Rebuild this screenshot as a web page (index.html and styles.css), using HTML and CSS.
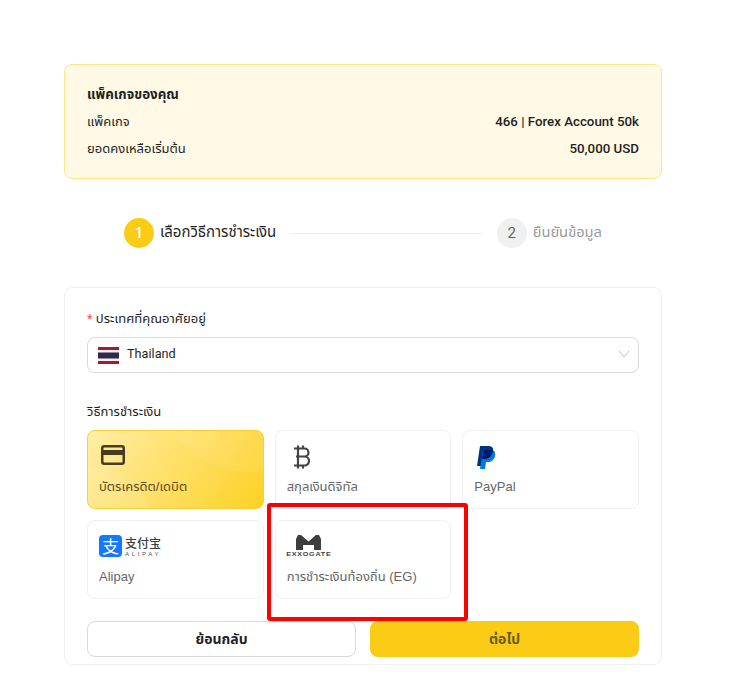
FILE: index.html
```html
<!DOCTYPE html>
<html lang="th">
<head>
<meta charset="utf-8">
<title>แพ็คเกจของคุณ</title>
<link rel="stylesheet" href="styles.css">
</head>
<body>
<main class="page">
  <section class="summary">
    <h2 class="summary-title">แพ็คเกจของคุณ</h2>
    <div class="summary-row"><span>แพ็คเกจ</span><strong>466 | Forex Account 50k</strong></div>
    <div class="summary-row"><span>ยอดคงเหลือเริ่มต้น</span><strong>50,000 USD</strong></div>
  </section>

  <ol class="steps">
    <li class="step active"><span class="step-num">1</span><span class="step-text">เลือกวิธีการชำระเงิน</span></li>
    <li class="step-line"></li>
    <li class="step"><span class="step-num">2</span><span class="step-text">ยืนยันข้อมูล</span></li>
  </ol>

  <section class="card">
    <label class="field-label"><span class="req">*</span> ประเทศที่คุณอาศัยอยู่</label>
    <div class="select">
      <svg class="flag" width="21" height="17" viewBox="0 0 21 17"><rect width="21" height="17" fill="#f4f0f2"/><rect width="21" height="3" fill="#a51931"/><rect y="5.500" width="21" height="6" fill="#2d2a4a"/><rect y="14" width="21" height="3" fill="#a51931"/></svg>
      <span class="select-value">Thailand</span>
      <svg class="chevron" width="12" height="8" viewBox="0 0 12 8"><path d="M1 1l5 6 5-6" fill="none" stroke="#c4c4c4" stroke-width="1"/></svg>
    </div>

    <div class="field-label methods-label">วิธีการชำระเงิน</div>
    <div class="methods">
      <div class="method selected">
        <svg class="ico" width="24" height="20" viewBox="0 0 24 20"><rect x="1.250" y="1.250" width="21.500" height="17.500" rx="2" fill="none" stroke="#463c20" stroke-width="2.500"/><rect x="2" y="5" width="20" height="5" fill="#463c20"/></svg>
        <span class="method-name">บัตรเครดิต/เดบิต</span>
      </div>
      <div class="method">
        <svg class="ico" width="26" height="24" viewBox="0 0 26 24"><path d="M7 3.500h8.500a4 4 0 0 1 0 8H7m8.500 0a4.300 4.300 0 0 1 0 9H7M9 3.500v17M9 .5v3M14 .5v3M9 20.500v3M14 20.500v3M5 3.500h4M5 20.500h4" fill="none" stroke="#444" stroke-width="2.200"/></svg>
        <span class="method-name">สกุลเงินดิจิทัล</span>
      </div>
      <div class="method">
        <svg class="ico" width="20" height="24" viewBox="0 0 20 24"><path d="M4 1h8c4 0 6 2 5 6-1 5-4 7-8 7H7l-1 7H1z" fill="#003087"/><path d="M7 5h8c3 0 5 2 4 6s-4 6-7 6h-2l-1 7H4z" fill="#0079e0"/><path d="M7.500 5H14c1.500 0 2.500.3 3 1-1 5-4 8-8 8H6z" fill="#00186a"/></svg>
        <span class="method-name">PayPal</span>
      </div>
      <div class="method">
        <div class="alipay">
          <span class="alipay-badge">支</span>
          <span class="alipay-words"><span class="alipay-cn">支付宝</span><span class="alipay-en">ALIPAY</span></span>
        </div>
        <span class="method-name">Alipay</span>
      </div>
      <div class="method">
        <div class="exxo">
          <svg width="25" height="15" viewBox="0 0 25 15"><path d="M2 0h3l7.500 6.500L20 0h3l2 4v11h-7v-5H7v5H0V4z" fill="#3e3e3e"/></svg>
          <span class="exxo-word">EXXOGATE</span>
        </div>
        <span class="method-name">การชำระเงินท้องถิ่น (EG)</span>
      </div>
    </div>

    <div class="actions">
      <button class="btn btn-back" type="button">ย้อนกลับ</button>
      <button class="btn btn-next" type="button">ต่อไป</button>
    </div>
  </section>
  <div class="highlight"></div>
</main>
</body>
</html>
```
FILE: styles.css
```css
* { box-sizing: border-box; }
html, body { margin: 0; background: #fff; }
body { font-family: Roboto, "Noto Sans Thai", "Noto Sans", sans-serif; font-size: 13px; color: #1f1f1f; }
.page { position: relative; width: 598px; margin-left: 64px; padding-top: 64px; }

.summary { height: 115px; padding: 21px 22px 0; background: #fff9e6; border: 1px solid #fde68a; border-radius: 8px; }
.summary-title { margin: 0; font-size: 13.400px; line-height: 18px; font-weight: 700; }
.summary-row { display: flex; justify-content: space-between; height: 27px; align-items: center; line-height: 18px; }
.summary-title + .summary-row { margin-top: 4px; }
.summary-row strong { font-size: 13.300px; font-weight: 500; }

.steps { display: flex; align-items: center; list-style: none; margin: 39px 0 0; padding: 0 60px; height: 30px; }
.step { display: flex; align-items: center; gap: 6px; }
.step-num { display: flex; align-items: center; justify-content: center; width: 30px; height: 30px; border-radius: 50%; background: #f0f0f0; color: #666; font-size: 15px; }
.step-text { font-size: 14.700px; line-height: 20px; padding-bottom: 2px; color: #999; white-space: nowrap; }
.step.active .step-num { background: #facc15; color: #fff; font-weight: 500; }
.step.active .step-text { color: #1f1f1f; font-size: 15px; }
.step-line { flex: 1; height: 1px; background: #ececec; margin: 0 16px 0 14px; }

.card { margin-top: 39px; height: 378px; padding: 19px 22px 0; border: 1px solid #f0f0f0; border-radius: 8px; }
.field-label { display: block; font-size: 13px; line-height: 24px; }
.req { color: #ff4d4f; }
.select { display: flex; align-items: center; height: 36px; margin-top: 6px; padding: 0 8px 0 10px; border: 1px solid #d9d9d9; border-radius: 8px; }
.flag { flex: none; margin-right: 8px; }
.select-value { flex: 1; font-size: 12.700px; line-height: 18px; padding-bottom: 2px; }
.chevron { margin-bottom: 2px; }
.methods-label { margin-top: 27px; }
.methods { display: grid; grid-template-columns: repeat(3, 1fr); grid-auto-rows: 79px; gap: 11px; margin-top: 6px; }
.method { position: relative; display: flex; flex-direction: column; justify-content: flex-end; padding: 0 11px 12px; border: 1px solid #f0f0f0; border-radius: 8px; overflow: hidden; }
.ico { position: absolute; left: 13px; top: 14px; }
.method-name { position: relative; font-family: "Liberation Sans", "Noto Sans Thai", sans-serif; font-size: 13px; line-height: 18px; color: #666; white-space: nowrap; }
.selected { border-color: #f8cf35; background: linear-gradient(125deg, #ffeea6 0%, #ffdf66 50%, #fdd123 100%); }
.selected::before { content: ""; position: absolute; left: 77px; top: -103px; width: 170px; height: 144px; border-radius: 50%; background: rgba(255,255,255,.07); }
.selected::after { content: ""; position: absolute; left: -66px; top: 36px; width: 130px; height: 106px; border-radius: 50%; background: rgba(255,255,255,.07); }
.selected .method-name { color: #5c4d1e; z-index: 1; }
.selected .ico { z-index: 1; }

.alipay { position: absolute; left: 11px; top: 14px; display: flex; gap: 3px; align-items: center; }
.alipay-badge { display: flex; align-items: center; justify-content: center; width: 23px; height: 22px; border-radius: 4px; background: #1677ff; color: #fff; font: 400 17px/22px "Noto Sans CJK SC", sans-serif; }
.alipay-words { display: flex; flex-direction: column; width: 36px; }
.alipay-cn { font: 500 12px/14px "Noto Sans CJK SC", sans-serif; color: #3e3e3e; }
.alipay-en { font: 400 6px/6px "Liberation Sans", sans-serif; margin-top: 1px; letter-spacing: 2.700px; color: #555; white-space: nowrap; }
.exxo { position: absolute; left: 10px; top: 14px; display: flex; flex-direction: column; align-items: center; gap: 1px; width: 46px; }
.exxo-word { font: 700 6px/7px "Liberation Sans", sans-serif; letter-spacing: .6px; color: #3e3e3e; white-space: nowrap; transform: scaleX(1.200); }

.actions { display: grid; grid-template-columns: 1fr 1fr; gap: 14px; margin-top: 22px; }
.btn { height: 36px; border-radius: 8px; font: 700 14px "Liberation Sans", "Noto Sans Thai", sans-serif; cursor: pointer; }
.btn-back { background: #fff; border: 1px solid #d9d9d9; color: #1f1f1f; }
.btn-next { background: #facc15; border: 0; color: #6b5a10; }

.highlight { position: absolute; left: 203px; top: 503px; width: 201px; height: 118px; border: 4px solid #f00; border-radius: 3px; }
```
